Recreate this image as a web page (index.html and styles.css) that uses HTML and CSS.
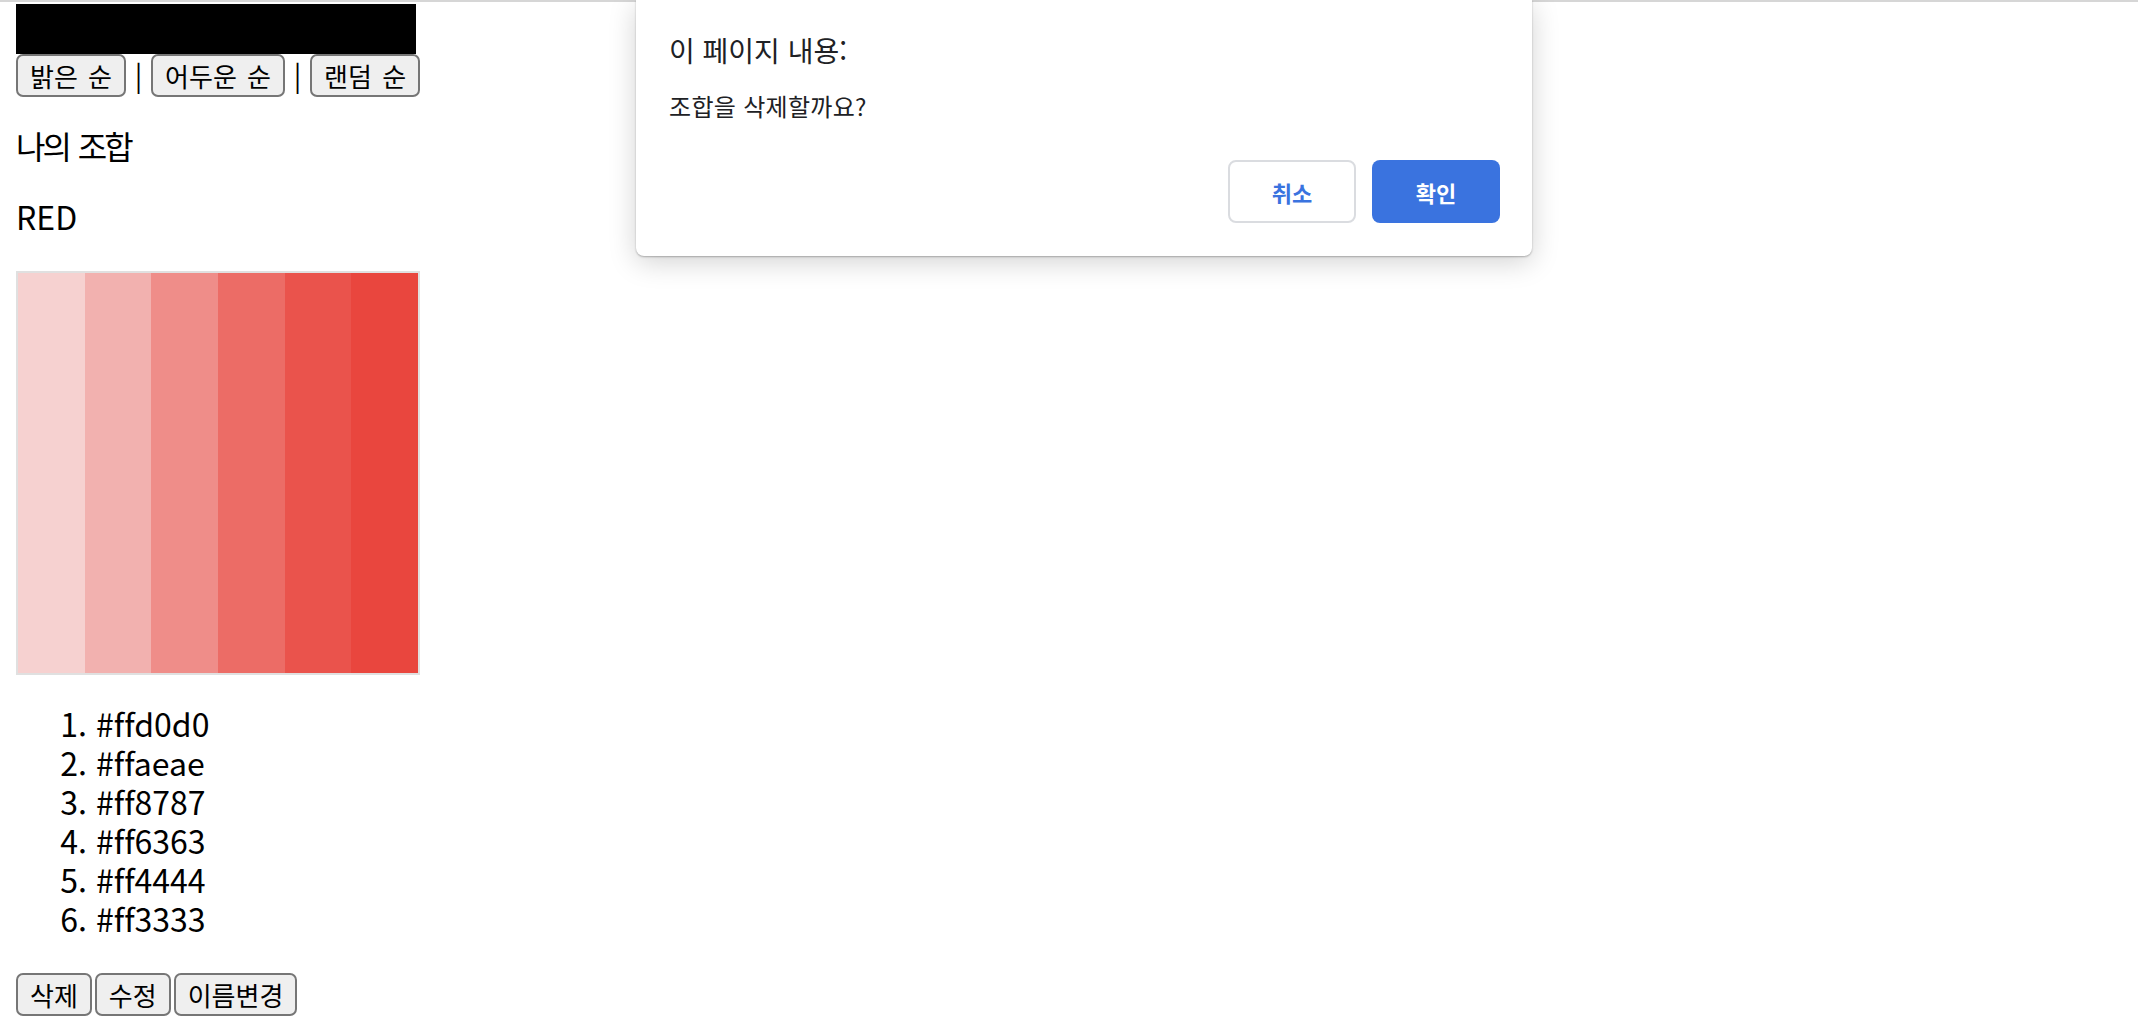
FILE: index.html
```html
<!DOCTYPE html>
<html lang="ko">
<head>
<meta charset="utf-8">
<title>나의 조합</title>
<link rel="stylesheet" href="styles.css">
</head>
<body>
<div class="topline"></div>
<main class="page">
  <div class="blackbar"></div>
  <div class="sortbar">
    <button class="btn">밝은 순</button><span class="sep">|</span><button class="btn">어두운 순</button><span class="sep">|</span><button class="btn">랜덤 순</button>
  </div>
  <p class="heading">나의 조합</p>
  <p class="name">RED</p>
  <div class="palette">
    <div class="swatch s1"></div>
    <div class="swatch s2"></div>
    <div class="swatch s3"></div>
    <div class="swatch s4"></div>
    <div class="swatch s5"></div>
    <div class="swatch s6"></div>
  </div>
  <ol class="colors">
    <li>#ffd0d0</li>
    <li>#ffaeae</li>
    <li>#ff8787</li>
    <li>#ff6363</li>
    <li>#ff4444</li>
    <li>#ff3333</li>
  </ol>
  <div class="actions">
    <button class="btn">삭제</button><button class="btn">수정</button><button class="btn">이름변경</button>
  </div>
</main>
<div class="dialog" role="alertdialog">
  <div class="dlg-title">이 페이지 내용:</div>
  <div class="dlg-msg">조합을 삭제할까요?</div>
  <div class="dlg-buttons">
    <button class="dlg-btn cancel">취소</button>
    <button class="dlg-btn ok">확인</button>
  </div>
</div>
</body>
</html>
```
FILE: styles.css
```css
* { box-sizing: border-box; }

body {
  margin: 0;
  font-family: "Noto Sans CJK KR", "Noto Sans", sans-serif;
  font-size: 32px;
  line-height: 39px;
  color: #000;
  background: #fff;
  font-variant-ligatures: none;
}

.topline {
  height: 2px;
  background: #d6d6d6;
}

.page {
  padding: 2px 16px 0;
}

.blackbar {
  width: 400px;
  height: 50px;
  background: #000;
}

.sortbar {
  display: flex;
  align-items: flex-start;
  height: 43px;
}

.btn {
  height: 43px;
  margin: 0;
  padding: 0 12px;
  border: 2px solid #767676;
  border-radius: 7px;
  background: #efefef;
  color: #000;
  font-family: inherit;
  font-size: 26px;
  line-height: 37px;
  letter-spacing: 0;
  word-spacing: 3px;
  white-space: nowrap;
}

.sep {
  width: 25px;
  text-align: center;
  font-size: 28px;
  line-height: 36px;
  margin-top: 2px;
}

.heading {
  margin: 29px 0 32px;
  letter-spacing: -3px;
  word-spacing: 3px;
}

.name {
  margin: 32px 0 35px;
}

.palette {
  display: flex;
  width: 404px;
  height: 404px;
  border: 2px solid #e0e0e0;
}

.swatch { flex: 1; }
.s1 { background: #f6d1d0; }
.s2 { background: #f2b1af; }
.s3 { background: #ef8d89; }
.s4 { background: #ec6c66; }
.s5 { background: #ea534c; }
.s6 { background: #e9463e; }

.colors {
  margin: 29px 0 35px;
  padding-left: 80px;
}

.actions {
  display: flex;
  gap: 3px;
}

.dialog {
  position: absolute;
  left: 636px;
  top: 0;
  width: 896px;
  height: 256px;
  padding: 32px 32px 33px 33px;
  display: flex;
  flex-direction: column;
  background: #fff;
  border-radius: 0 0 8px 8px;
  box-shadow: 0 1px 2px rgba(0, 0, 0, 0.28), 0 6px 28px rgba(0, 0, 0, 0.18);
  color: #202124;
}

.dlg-title {
  font-size: 28px;
  line-height: 36px;
  letter-spacing: 0;
}

.dlg-msg {
  margin-top: 23px;
  font-size: 24px;
  line-height: 30px;
  letter-spacing: 0.3px;
}

.dlg-buttons {
  margin-top: auto;
  display: flex;
  justify-content: flex-end;
  gap: 16px;
}

.dlg-btn {
  width: 128px;
  height: 63px;
  margin: 0;
  border-radius: 8px;
  font-family: inherit;
  font-size: 22px;
  font-weight: 700;
}

.cancel {
  background: #fff;
  border: 2px solid #dadce0;
  color: #3a73df;
}

.ok {
  background: #3a73df;
  border: none;
  color: #fff;
}
```
